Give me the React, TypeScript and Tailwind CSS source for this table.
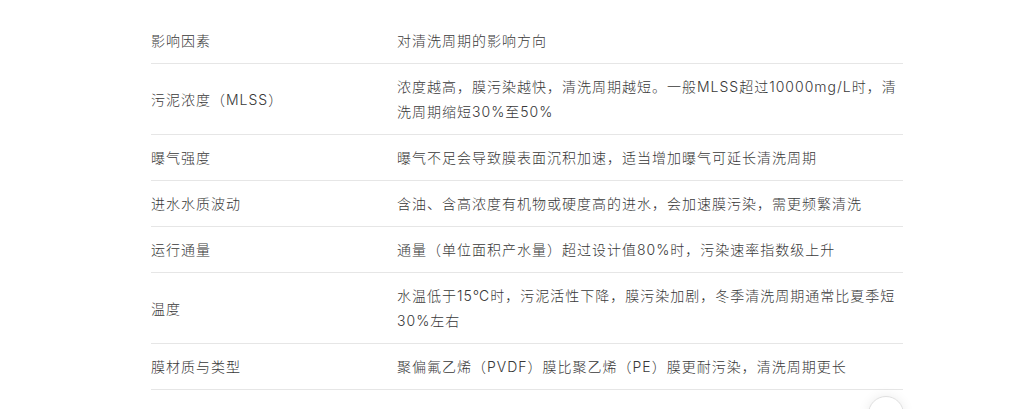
import React from "react";

const rows: [string, string][] = [
  ["污泥浓度（MLSS）", "浓度越高，膜污染越快，清洗周期越短。一般MLSS超过10000mg/L时，清洗周期缩短30%至50%"],
  ["曝气强度", "曝气不足会导致膜表面沉积加速，适当增加曝气可延长清洗周期"],
  ["进水水质波动", "含油、含高浓度有机物或硬度高的进水，会加速膜污染，需更频繁清洗"],
  ["运行通量", "通量（单位面积产水量）超过设计值80%时，污染速率指数级上升"],
  ["温度", "水温低于15℃时，污泥活性下降，膜污染加剧，冬季清洗周期通常比夏季短30%左右"],
  ["膜材质与类型", "聚偏氟乙烯（PVDF）膜比聚乙烯（PE）膜更耐污染，清洗周期更长"],
];

export default function App() {
  return (
    <div
      className="relative w-[1017px] h-[409px] overflow-hidden bg-white text-[#383838]"
      style={{ fontFamily: 'Inter, "Noto Sans CJK SC", sans-serif' }}
    >
      <div className="ml-[151px] mt-[18px] w-[752px] text-[14px] leading-[25px] tracking-[1px] font-light">
        <div className="grid grid-cols-[246px_1fr] py-[10px] border-b border-[#e6e6e6]">
          <div>影响因素</div>
          <div>对清洗周期的影响方向</div>
        </div>
        {rows.map(([a, b]) => (
          <div key={a} className="grid grid-cols-[246px_1fr] items-center py-[10px] border-b border-[#e6e6e6]">
            <div>{a}</div>
            <div>{b}</div>
          </div>
        ))}
      </div>
      <div className="absolute left-[868px] top-[396px] w-[36px] h-[36px] rounded-full bg-white border border-[#e0e0e0] shadow-[0_0_12px_rgba(0,0,0,0.08)]" />
    </div>
  );
}
